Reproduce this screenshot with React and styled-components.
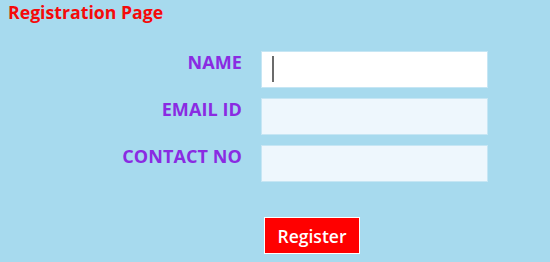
import React from "react";
import styled, { createGlobalStyle } from "styled-components";

const Global = createGlobalStyle`
  html, body { margin: 0; padding: 0; background: #a7daee; }
  body { font-family: "Open Sans", "Noto Sans", sans-serif; }
`;

const Page = styled.div`
  width: 550px;
  height: 262px;
  background: #a7daee;
  box-sizing: border-box;
  padding: 0 0 0 8px;
`;

const Title = styled.h1`
  margin: 0;
  font-size: 17.7px;
  line-height: 24px;
  font-weight: 700;
  color: #f50a0a;
`;

const Form = styled.div`
  display: grid;
  grid-template-columns: 234px 227px;
  column-gap: 19px;
  row-gap: 10px;
  margin-top: 27px;
`;

const Label = styled.label`
  text-align: right;
  font-size: 18px;
  font-weight: 700;
  color: #8a2be2;
  line-height: 22px;
  letter-spacing: 0.1px;
`;

const Input = styled.div`
  height: 37px;
  box-sizing: border-box;
  background: ${(p) => (p.$focused ? "#ffffff" : "#eef7fd")};
  border: 1px solid #c6e6f4;
  position: relative;
`;

const Caret = styled.span`
  position: absolute;
  left: 10px;
  top: 4px;
  width: 2px;
  height: 26px;
  background: #6b6b6b;
`;

const ButtonRow = styled.div`
  padding: 35px 0 0 256px;
`;

const Button = styled.button`
  width: 96px;
  height: 37px;
  background: #ff0000;
  border: 1px solid #ffffff;
  color: #ffffff;
  font-family: "Open Sans", "Noto Sans", sans-serif;
  font-size: 17.5px;
  font-weight: 600;
  padding: 0;
`;

export default function App() {
  return (
    <>
      <Global />
      <Page>
        <Title>Registration Page</Title>
        <Form>
          <Label>NAME</Label>
          <Input $focused>
            <Caret />
          </Input>
          <Label>EMAIL ID</Label>
          <Input />
          <Label>CONTACT NO</Label>
          <Input />
        </Form>
        <ButtonRow>
          <Button>Register</Button>
        </ButtonRow>
      </Page>
    </>
  );
}
